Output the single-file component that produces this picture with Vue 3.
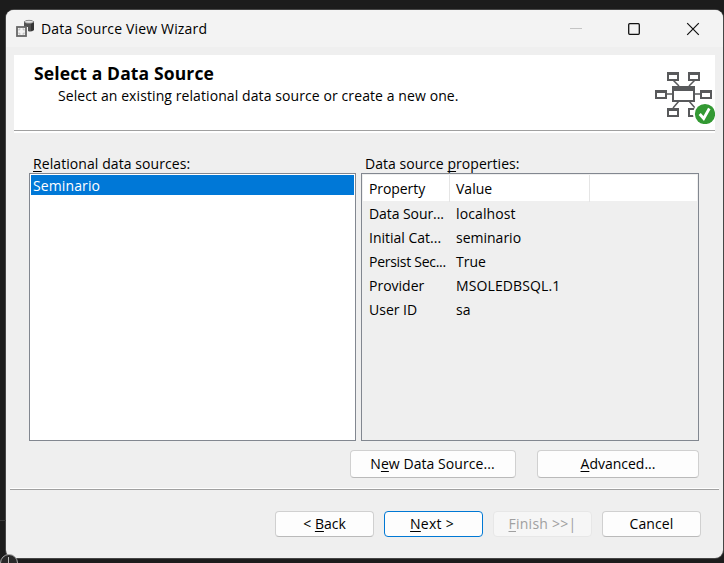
<script setup>
const rows = [
  ['Data Sour...', 'localhost', 'r1', 'v1'],
  ['Initial Cat...', 'seminario', 'r2', 'v2'],
  ['Persist Sec...', 'True', 'r3', 'v3'],
  ['Provider', 'MSOLEDBSQL.1', 'r4', 'v4'],
  ['User ID', 'sa', 'r5', 'v5'],
]
</script>

<template>
  <div class="desktop">
    <svg class="backdrop" width="20" height="46" viewBox="0 0 20 46">
      <path d="M0 3.5H6" stroke="#383838" />
      <circle cx="9" cy="46" r="8.5" fill="#292929" stroke="#aaa" />
      <path d="M8.5 40V46" stroke="#bbb" />
    </svg>
    <main class="window">
      <header class="titlebar">
        <svg class="app-icon" width="19" height="19" viewBox="0 0 19 19">
          <path d="M8 2.5Q13 .2 18 2.5V11Q15 13.5 12 12V8H8Z" fill="#505050" />
          <path d="M15 4H18V11L15 12Z" fill="#343434" />
          <ellipse cx="13" cy="2.8" rx="4.4" ry="1.5" fill="#e3e3e3" stroke="#777" stroke-width=".7" />
          <rect x="1" y="8" width="9" height="9" fill="#f2f2f2" stroke="#666" stroke-width="1.8" />
          <path d="M3 11.5V10H4.5M6.5 10H8V11.5M3 13.5V15H4.5M6.5 15H8V13.5" fill="none" stroke="#aaa" stroke-width=".8" />
        </svg>
        <h1 class="title"><span class="t-title">Data Source View Wizard</span></h1>
        <svg class="controls" width="136" height="18" viewBox="0 0 136 18">
          <path d="M2 8.5H14" stroke="#c4c4c4" />
          <rect x="60.7" y="3.7" width="10.6" height="10.6" rx="1" fill="none" stroke="#111" stroke-width="1.3" />
          <path d="M119.2 3.2L130.8 14.8M130.8 3.2L119.2 14.8" stroke="#111" stroke-width="1.2" />
        </svg>
      </header>

      <section class="banner">
        <div class="banner-text">
          <h2><span class="t-head">Select a Data Source</span></h2>
          <p><span class="t-sub">Select an existing relational data source or create a new one.</span></p>
        </div>
        <svg class="diagram" width="60" height="54" viewBox="0 0 60 54">
          <g fill="#fff" stroke="#58595b" stroke-width="2">
            <path d="M18 10L24 16M40 10L34 16M24 31L18 38M34 31L40 38M11 24H19M40 24H51" stroke-width="1.5" />
            <rect x="13" y="3" width="10" height="7" /><rect x="34" y="3" width="10" height="7" />
            <rect x="1" y="21" width="10" height="7" /><rect x="46" y="21" width="10" height="7" />
            <rect x="13" y="39" width="10" height="7" /><rect x="34" y="39" width="10" height="7" />
            <rect x="18" y="17" width="21" height="14" />
          </g>
          <path d="M12 2H24V5H12ZM33 2H45V5H33ZM0 20H12V23H0ZM45 20H57V23H45ZM12 38H24V41H12ZM17 16H40V21H17Z" fill="#58595b" />
          <circle cx="50" cy="44" r="12" fill="#fff" />
          <circle cx="50" cy="44" r="10.1" fill="#339933" />
          <path d="M44.7 44L48.7 48.5L54.3 38.5" fill="none" stroke="#fff" stroke-width="2.8" />
        </svg>
      </section>

      <section class="content">
        <div class="sources">
          <label><span class="t-rel"><u>R</u>elational data sources:</span></label>
          <div class="list"><div class="selected"><span class="t-sem">Seminario</span></div></div>
        </div>
        <div class="properties">
          <label><span class="t-prop">Data source <u>p</u>roperties:</span></label>
          <div class="table">
            <div class="thead">
              <div class="cell"><span class="t-h1">Property</span></div>
              <div class="cell"><span class="t-h2">Value</span></div>
              <div class="cell"></div>
            </div>
            <div v-for="r in rows" :key="r[0]" class="row">
              <div class="cell"><span :class="r[2]">{{ r[0] }}</span></div>
              <div class="cell"><span :class="r[3]">{{ r[1] }}</span></div>
            </div>
          </div>
        </div>
      </section>

      <div class="actions">
        <button class="new"><span class="t-new">N<u>e</u>w Data Source...</span></button>
        <button class="advanced"><span class="t-adv"><u>A</u>dvanced...</span></button>
      </div>
      <footer>
        <button><span class="t-back">&lt; <u>B</u>ack</span></button>
        <button class="primary"><span class="t-next"><u>N</u>ext &gt;</span></button>
        <button class="disabled" disabled><span class="t-fin"><u>F</u>inish &gt;&gt;|</span></button>
        <button><span class="t-can">Cancel</span></button>
      </footer>
    </main>
  </div>
</template>

<style>
body { margin: 0; background: #1c1c1c; overflow: hidden; }
</style>
<style scoped>
* { box-sizing: border-box; }
.desktop { position: relative; width: 724px; height: 563px; padding: 10px 0 0 6px; background: #1c1c1c; overflow: hidden;
  font: 14px/20px "Open Sans", "Noto Sans", sans-serif; color: #000; }
.backdrop { position: absolute; left: 0; top: 517px; z-index: 1; clip-path: polygon(0 0, 6px 0, 6px 34px, 20px 40px, 20px 46px, 0 46px); }
.window { width: 717px; height: 548px; background: #efefef; border-radius: 8px; overflow: hidden; box-shadow: 0 0 0 1px #464646; }
.titlebar { display: flex; align-items: center; height: 37px; padding-left: 10px; background: #f3f3f3; }
h1, h2, p { margin: 0; font-size: 14px; font-weight: 400; white-space: nowrap; }
.title { flex: 1; margin-left: 6px; }
.controls { margin-right: 19px; }
span { display: inline-block; white-space: pre; }
u { text-decoration-thickness: 1px; text-underline-offset: 2px; text-decoration-skip-ink: none; }
.banner { display: flex; justify-content: space-between; height: 78px; margin: 8px 8px 0; background: #fff;
  border-bottom: 2px solid #fff; box-shadow: inset 0 -1px #a0a0a0; }
.banner-text { padding: 7px 0 0 20px; }
h2 { height: 23px; font-size: 17.5px; font-weight: 700; line-height: 22px; }
p { padding-left: 24px; line-height: 22px; }
.diagram { margin-top: 15px; }
.content { display: flex; gap: 5px; padding: 20px 0 0 23px; }
.sources { width: 327px; }
.properties { width: 338px; }
label { display: block; height: 20px; padding-left: 4px; line-height: 21px; }
.list, .table { height: 268px; border: 1px solid #828790; }
.list { padding: 1px; background: #fff; }
.selected { height: 20px; padding-left: 2px; background: #0078d7; color: #fff; line-height: 21px; }
.table { padding: 1px; background: #efefef; }
.thead, .row { display: grid; grid-template-columns: 87px 140px 1fr; height: 24px; line-height: 24px; }
.thead { height: 26px; margin-bottom: 1px; background: #fff; line-height: 27px; }
.cell { padding-left: 6px; }
.thead .cell:not(:last-child) { border-right: 1px solid #e5e5e5; }
.actions { display: flex; gap: 21px; padding: 9px 0 0 344px; }
button { width: 99px; height: 26px; padding: 0; border: 1px solid #d0d0d0; border-bottom-color: #bababa; border-radius: 4px;
  background: #fdfdfd; color: #000; font: inherit; line-height: 22px; }
.new { width: 166px; height: 28px; padding-right: 1px; }
.advanced { width: 162px; height: 28px; }
footer { display: flex; gap: 10px; margin: 10px 4px 0; padding: 22px 0 0 265px; border-top: 1px solid #fff; box-shadow: inset 0 1px #a0a0a0; }
.primary { border-color: #0078d4; padding-right: 3px; }
.disabled { background: #f6f6f6; border-color: #e7e7e7; color: #a0a0a0; padding-right: 0; }
.t-title { letter-spacing: .17px; }
.t-head { letter-spacing: .13px; }
.t-sub { letter-spacing: .09px; }
.t-rel { letter-spacing: .08px; }
.t-prop { letter-spacing: .04px; }
.t-sem, .v1 { letter-spacing: .12px; }
.r1, .t-h1 { letter-spacing: -.08px; }
.r3 { letter-spacing: -.28px; }
.v4 { letter-spacing: .12px; }
.t-new { letter-spacing: .06px; }
.t-next { letter-spacing: .25px; }
.t-fin { letter-spacing: .25px; }
.t-can { letter-spacing: .1px; }
</style>
